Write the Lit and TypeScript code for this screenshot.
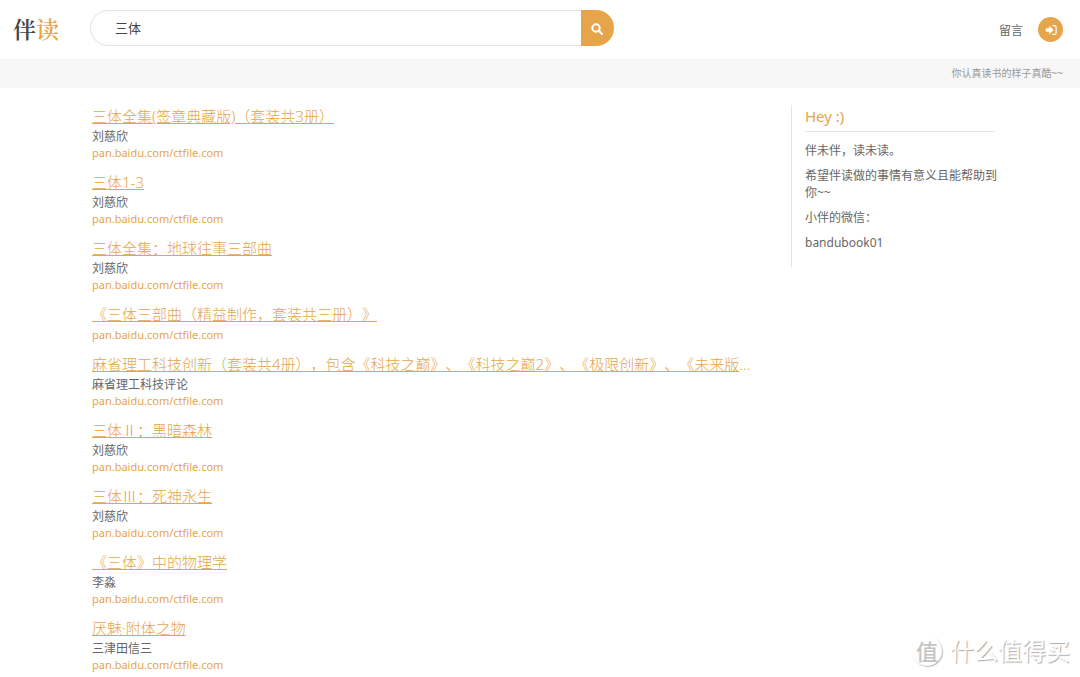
import { LitElement, html, css, nothing } from "lit";
import { customElement, state } from "lit/decorators.js";

interface Book {
  title: string;
  author?: string;
}

const SOURCE = "pan.baidu.com/ctfile.com";

const BOOKS: Book[] = [
  { title: "三体全集(签章典藏版)（套装共3册）", author: "刘慈欣" },
  { title: "三体1-3", author: "刘慈欣" },
  { title: "三体全集：地球往事三部曲", author: "刘慈欣" },
  { title: "《三体三部曲（精益制作，套装共三册）》" },
  {
    title: "麻省理工科技创新（套装共4册），包含《科技之巅》、《科技之巅2》、《极限创新》、《未来版图》",
    author: "麻省理工科技评论",
  },
  { title: "三体Ⅱ：黑暗森林", author: "刘慈欣" },
  { title: "三体Ⅲ：死神永生", author: "刘慈欣" },
  { title: "《三体》中的物理学", author: "李淼" },
  { title: "厌魅·附体之物", author: "三津田信三" },
];

@customElement("app-root")
export class AppRoot extends LitElement {
  static styles = css`
    :host {
      display: block;
      position: relative;
      min-height: 100vh;
      background: #fff;
      color: #666;
      font-family: "Noto Sans", "Noto Sans CJK SC", sans-serif;
      font-size: 12px;
      text-spacing-trim: space-all;
      --accent: #e6a54a;
    }
    * { box-sizing: border-box; }
    a { color: inherit; text-decoration: none; }
    .header {
      display: flex;
      align-items: center;
      height: 59px;
      padding: 0 17px 0 13px;
    }
    .logo {
      width: 77px;
      flex: none;
      font-family: "Noto Serif CJK SC", "Noto Sans CJK SC", serif;
      font-size: 23px;
      font-weight: 600;
      line-height: 30px;
      padding-bottom: 2px;
      color: #444;
    }
    .logo-accent { color: var(--accent); }
    .search {
      display: flex;
      flex: 0 1 524px;
      height: 36px;
      margin-bottom: 3px;
    }
    .field {
      flex: 1;
      min-width: 0;
      border: 1px solid #e4e4e4;
      border-right: 0;
      border-radius: 18px 0 0 18px;
      padding: 0 24px 2px;
      font: inherit;
      font-size: 13px;
      color: #444;
      background: #fff;
      outline: none;
    }
    .submit {
      width: 33px;
      border: 0;
      padding: 2px 2px 0 0;
      border-radius: 0 18px 18px 0;
      background: var(--accent);
      display: grid;
      place-items: center;
      cursor: pointer;
    }
    .account {
      margin-left: auto;
      display: flex;
      align-items: center;
      gap: 15px;
    }
    .login {
      width: 25px;
      height: 25px;
      border-radius: 50%;
      background: var(--accent);
      display: grid;
      place-items: center;
    }
    .motto {
      background: #f7f7f7;
      color: #999;
      text-align: right;
      font-size: 10px;
      line-height: 29px;
      padding: 0 17px;
    }
    .page {
      display: flex;
      justify-content: space-between;
      align-items: flex-start;
      padding: 17px 85px 0 92px;
    }
    .results {
      display: flex;
      flex-direction: column;
      gap: 11px;
      list-style: none;
      margin: 0;
      padding: 0;
      flex: 0 1 668px;
      min-width: 0;
    }
    .title {
      margin: 0;
      font-size: 15px;
      line-height: 23px;
      font-weight: 300;
      color: var(--accent);
      overflow: hidden;
      white-space: nowrap;
      text-overflow: ellipsis;
    }
    .title:has(+ .source) { padding-bottom: 1px; }
    .title-link { text-decoration: underline; }
    .author, .source { display: block; }
    .author { line-height: 17px; }
    .source { font-size: 11px; line-height: 15px; color: var(--accent); }
    .aside {
      flex: 0 0 204px;
      border-left: 1px solid #e4e4e4;
      padding: 0 0 8px 13px;
    }
    .hey {
      margin: 0 0 10px;
      padding-bottom: 4px;
      border-bottom: 1px solid #e4e4e4;
      font-size: 15px;
      line-height: 22px;
      font-weight: 400;
      color: var(--accent);
    }
    .note { margin: 0 -2px 8px 0; line-height: 17px; }
    .watermark {
      position: absolute;
      right: 10px;
      bottom: 8px;
      display: flex;
      align-items: center;
      gap: 8px;
      color: #fff;
      font-size: 24px;
      line-height: 36px;
      text-shadow: 1px 1px 1px #aaa;
      pointer-events: none;
    }
    .seal {
      width: 30px;
      height: 30px;
      border-radius: 50%;
      box-shadow: 1px 1px 1px #bbb;
      display: grid;
      place-items: center;
      color: #c4c4c4;
      font-size: 22px;
      line-height: 30px;
      font-weight: 500;
      text-shadow: none;
    }
  `;

  @state() private query = "三体";

  render() {
    return html`
      <header class="header">
        <a class="logo" href="#">伴<span class="logo-accent">读</span></a>
        <form class="search" role="search" @submit=${(e: Event) => e.preventDefault()}>
          <input
            class="field"
            type="text"
            aria-label="搜索"
            .value=${this.query}
            @input=${(e: Event) => (this.query = (e.target as HTMLInputElement).value)}
          />
          <button class="submit" type="submit" aria-label="搜索">
            <svg width="12" height="12" viewBox="0 0 12 12" fill="none" stroke="#fff" stroke-width="2">
              <circle cx="5" cy="5" r="3.7" />
              <path d="M7.8 7.8 11 11" stroke-width="2.3" stroke-linecap="round" />
            </svg>
          </button>
        </form>
        <nav class="account">
          <a href="#">留言</a>
          <a class="login" href="#" aria-label="登录">
            <svg width="12" height="12" viewBox="0 0 12 12" fill="#fff">
              <path d="M1.2 4.2h3V1.8L8.6 6l-4.4 4.2V7.8h-3q-.5 0-.5-.5V4.7q0-.5.5-.5z" />
              <path d="M7.2 1.7h2.3q1.6 0 1.6 1.6v5.4q0 1.6-1.6 1.6H7.2" fill="none" stroke="#fff" stroke-width="1.2" />
            </svg>
          </a>
        </nav>
      </header>
      <div class="motto">你认真读书的样子真酷~~</div>
      <main class="page">
        <ul class="results">
          ${BOOKS.map(
            (book) => html`
              <li>
                <h2 class="title"><a class="title-link" href="#">${book.title}</a></h2>
                ${book.author ? html`<span class="author">${book.author}</span>` : nothing}
                <a class="source" href="#">${SOURCE}</a>
              </li>
            `
          )}
        </ul>
        <aside class="aside">
          <h2 class="hey">Hey :)</h2>
          <p class="note">伴未伴，读未读。</p>
          <p class="note">希望伴读做的事情有意义且能帮助到你~~</p>
          <p class="note">小伴的微信：</p>
          <p class="note">bandubook01</p>
        </aside>
      </main>
      <div class="watermark"><span class="seal">值</span><span>什么值得买</span></div>
    `;
  }
}
